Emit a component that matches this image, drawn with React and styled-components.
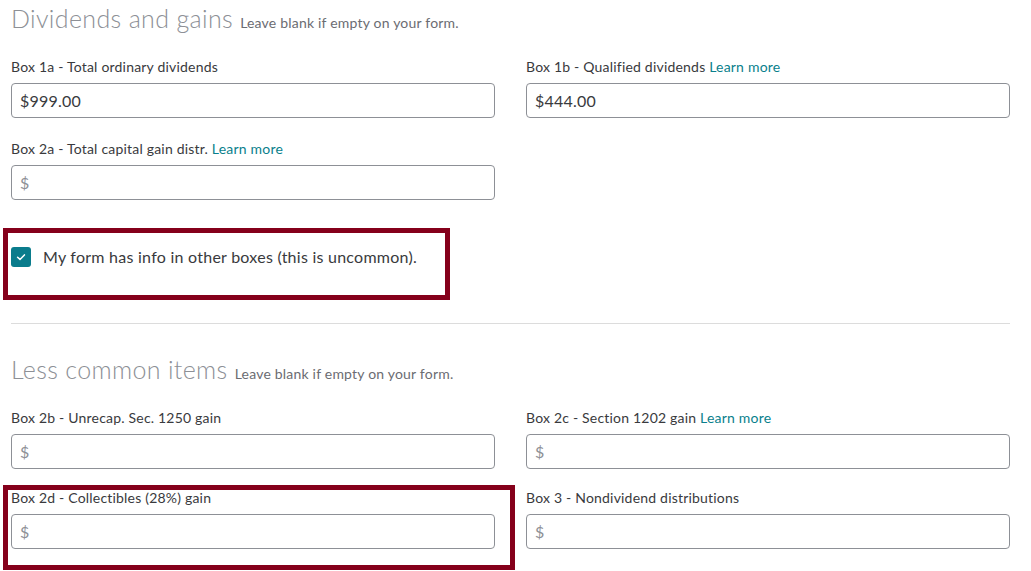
import React from "react";
import styled, { createGlobalStyle } from "styled-components";

const GlobalStyle = createGlobalStyle`
  html, body {
    margin: 0;
    padding: 0;
    background: #ffffff;
  }
  body {
    font-family: Lato, "Noto Sans", sans-serif;
    color: #393a3d;
  }
`;

const dividendFields = [
  { label: "Box 1a - Total ordinary dividends", value: "$999.00" },
  { label: "Box 1b - Qualified dividends", link: true, value: "$444.00" },
  { label: "Box 2a - Total capital gain distr.", link: true },
];

const lessCommonFields = [
  { label: "Box 2b - Unrecap. Sec. 1250 gain" },
  { label: "Box 2c - Section 1202 gain", link: true },
  { label: "Box 2d - Collectibles (28%) gain", marked: true },
  { label: "Box 3 - Nondividend distributions" },
];

function Field({ label, link, value, marked }) {
  return (
    <FieldBox $marked={marked}>
      <Label>
        {label}
        {link && <LearnMore href="#"> Learn more</LearnMore>}
      </Label>
      <Input defaultValue={value || ""} placeholder="$" />
    </FieldBox>
  );
}

export default function App() {
  return (
    <Page>
      <GlobalStyle />
      <Section>
        <Heading>
          Dividends and gains <Hint>Leave blank if empty on your form.</Hint>
        </Heading>
        <Grid $rowGap={21}>
          {dividendFields.map((f) => (
            <Field key={f.label} {...f} />
          ))}
        </Grid>
        <CheckRow>
          <Check>
            <svg width="12" height="12" viewBox="0 0 12 12" fill="none">
              <path
                d="M2.6 6.2 L5 8.4 L9.4 3.9"
                stroke="#ffffff"
                strokeWidth="1.5"
                strokeLinecap="round"
                strokeLinejoin="round"
              />
            </svg>
          </Check>
          <CheckText>My form has info in other boxes (this is uncommon).</CheckText>
        </CheckRow>
      </Section>
      <Divider />
      <Section>
        <Heading $second>
          Less common items <Hint>Leave blank if empty on your form.</Hint>
        </Heading>
        <Grid $rowGap={19}>
          {lessCommonFields.map((f) => (
            <Field key={f.label} {...f} />
          ))}
        </Grid>
      </Section>
    </Page>
  );
}

const Page = styled.div`
  width: 999px;
  padding: 0 21px 24px 11px;
`;

const Section = styled.div`
  display: flex;
  flex-direction: column;
`;

const Heading = styled.h2`
  margin: ${(p) => (p.$second ? "29px 0 0 0" : "2px 0 0 0")};
  height: 32px;
  font-size: 25px;
  line-height: 32px;
  font-weight: 300;
  letter-spacing: 0.35px;
  color: #8d9096;
`;

const Hint = styled.span`
  font-size: 14px;
  line-height: 1;
  font-weight: 400;
  letter-spacing: 0.2px;
  color: #6b6c72;
`;

const Grid = styled.div`
  display: grid;
  grid-template-columns: 484px 484px;
  column-gap: 31px;
  row-gap: ${(p) => p.$rowGap}px;
  margin-top: 23px;
`;

const FieldBox = styled.div`
  position: relative;
  display: flex;
  flex-direction: column;
  gap: 6px;

  &::after {
    content: "";
    display: ${(p) => (p.$marked ? "block" : "none")};
    position: absolute;
    top: -3px;
    left: -8px;
    right: -20px;
    bottom: -21px;
    border: 5px solid #85001b;
    pointer-events: none;
  }
`;

const Label = styled.div`
  font-size: 14px;
  line-height: 20px;
  letter-spacing: 0.2px;
  color: #393a3d;
`;

const LearnMore = styled.a`
  color: #0a7f8c;
  text-decoration: none;
`;

const Input = styled.input`
  box-sizing: border-box;
  width: 100%;
  height: 35px;
  padding: 0 8px;
  border: 1px solid #8d9096;
  border-radius: 4px;
  font-family: Lato, "Noto Sans", sans-serif;
  font-size: 16px;
  letter-spacing: 0.2px;
  color: #393a3d;
  &::placeholder {
    color: #8d9096;
  }
`;

const CheckRow = styled.label`
  box-sizing: border-box;
  display: flex;
  align-items: center;
  gap: 12px;
  width: 447px;
  margin: 28px 0 0 -8px;
  padding: 14px 10px 28px 3px;
  border: 5px solid #85001b;
`;

const Check = styled.span`
  display: flex;
  align-items: center;
  justify-content: center;
  width: 20px;
  height: 20px;
  border-radius: 3px;
  background: #0a7c8c;
  flex-shrink: 0;
`;

const CheckText = styled.span`
  font-size: 16px;
  line-height: 20px;
  letter-spacing: 0.25px;
  color: #393a3d;
`;

const Divider = styled.hr`
  margin: 23px 0 0 0;
  border: none;
  border-top: 1px solid #dcdcdc;
`;
